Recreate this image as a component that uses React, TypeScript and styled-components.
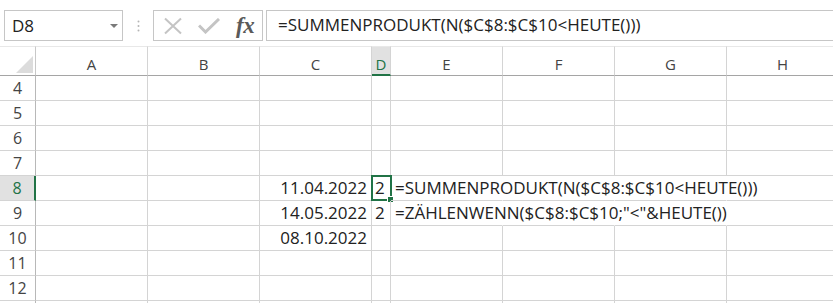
import React from 'react';
import styled, { createGlobalStyle } from 'styled-components';

const GlobalStyle = createGlobalStyle`
  html, body { margin: 0; padding: 0; background: #fff; }
  body {
    width: 833px; height: 303px; overflow: hidden;
    font-family: "Open Sans", "Liberation Sans", sans-serif;
  }
`;

const Page = styled.div`
  width: 833px;
  height: 303px;
  overflow: hidden;
  background: #fff;
`;

const Toolbar = styled.div`
  display: flex;
  align-items: flex-start;
  height: 46px;
  box-sizing: border-box;
  padding: 10px 0 0 4px;
`;

const NameBox = styled.div`
  flex: none;
  width: 119px;
  height: 31px;
  box-sizing: border-box;
  border: 1px solid #c6c6c6;
  display: flex;
  align-items: center;
  justify-content: space-between;
  padding: 0 4px 0 7px;
  font-size: 17px;
  line-height: 29px;
  color: #222;
`;

const Caret = styled.span`
  width: 0;
  height: 0;
  border-left: 4px solid transparent;
  border-right: 4px solid transparent;
  border-top: 4px solid #7a7a7a;
  margin-top: 1px;
`;

const Grip = styled.div`
  flex: none;
  width: 30px;
  height: 31px;
  display: flex;
  align-items: center;
  justify-content: center;
`;

const FxBox = styled.div`
  flex: none;
  width: 110px;
  height: 31px;
  box-sizing: border-box;
  border: 1px solid #c6c6c6;
  display: flex;
  align-items: center;
  padding-left: 9px;
`;

const FxIcon = styled.span<{ $gap: number }>`
  display: flex;
  align-items: center;
  margin-left: ${p => p.$gap}px;
`;

const FxText = styled.span`
  margin-left: 16px;
  font-family: "Liberation Serif", "DejaVu Serif", serif;
  font-style: italic;
  font-weight: bold;
  font-size: 23px;
  line-height: 29px;
  color: #5a5a5a;
  letter-spacing: -0.5px;
`;

const FormulaBox = styled.div`
  flex: 1;
  margin-left: 3px;
  height: 31px;
  box-sizing: border-box;
  border: 1px solid #c6c6c6;
  border-right: none;
  padding-left: 11px;
  font-size: 17px;
  line-height: 28px;
  color: #222;
  white-space: nowrap;
  overflow: hidden;
`;

const Sheet = styled.div`
  display: grid;
  grid-template-columns: 36px 112px 112px 112px 19px 112px 112px 112px 112px;
  grid-template-rows: 30px;
  grid-auto-rows: 25px;
`;

const Corner = styled.div`
  box-sizing: border-box;
  border-top: 1px solid #e8e8e8;
  border-right: 1px solid #c8c8c8;
  border-bottom: 1px solid #a5a5a5;
  display: flex;
  align-items: flex-end;
  justify-content: flex-end;
  padding: 0 2px 2px 0;
`;

const ColHead = styled.div<{ $active?: boolean }>`
  box-sizing: border-box;
  border-top: 1px solid #e8e8e8;
  border-right: 1px solid #d4d4d4;
  border-bottom: ${p => (p.$active ? '2px solid #217346' : '1px solid #a5a5a5')};
  background: ${p => (p.$active ? '#e1e1e1' : '#fff')};
  color: ${p => (p.$active ? '#217346' : '#444')};
  display: flex;
  align-items: flex-end;
  justify-content: center;
  font-size: 15px;
  line-height: 20px;
  padding-bottom: ${p => (p.$active ? 0 : 1)}px;
`;

const RowHead = styled.div<{ $active?: boolean }>`
  box-sizing: border-box;
  border-bottom: 1px solid #d4d4d4;
  border-right: ${p => (p.$active ? '2px solid #217346' : '1px solid #b8b8b8')};
  background: ${p => (p.$active ? '#e1e1e1' : '#fff')};
  color: ${p => (p.$active ? '#217346' : '#444')};
  font-size: 16px;
  line-height: 24px;
  text-align: center;
`;

const Cell = styled.div<{ $align?: 'left' | 'right'; $hideRight?: boolean; $pad?: number }>`
  position: relative;
  box-sizing: border-box;
  border-right: 1px solid ${p => (p.$hideRight ? 'transparent' : '#d4d4d4')};
  border-bottom: 1px solid #d4d4d4;
  font-size: 17px;
  line-height: 24px;
  color: #222;
  white-space: nowrap;
  overflow: visible;
  text-align: ${p => p.$align ?? 'left'};
  padding: 0 ${p => p.$pad ?? 4}px;
`;

const Selection = styled.div`
  position: absolute;
  top: -1px;
  left: -1px;
  right: -2px;
  bottom: -1px;
  border: 2px solid #217346;
  pointer-events: none;
`;

const Handle = styled.span`
  position: absolute;
  right: -4px;
  bottom: -4px;
  width: 5px;
  height: 5px;
  background: #217346;
  border: 1px solid #fff;
`;

const COLS = ['A', 'B', 'C', 'D', 'E', 'F', 'G', 'H'];
const ROWS = [4, 5, 6, 7, 8, 9, 10, 11, 12, 13];
const VISIBLE_LAST = 12;

const DATES: Record<number, string> = { 8: '11.04.2022', 9: '14.05.2022', 10: '08.10.2022' };
const COUNTS: Record<number, string> = { 8: '2', 9: '2' };
const FORMULAS: Record<number, string> = {
  8: '=SUMMENPRODUKT(N($C$8:$C$10<HEUTE()))',
  9: '=ZÄHLENWENN($C$8:$C$10;"<"&HEUTE())',
};

export default function App() {
  return (
    <Page>
      <GlobalStyle />
      <Toolbar>
        <NameBox>
          <span>D8</span>
          <Caret />
        </NameBox>
        <Grip>
          <svg width="3" height="12" viewBox="0 0 3 12">
            <circle cx="1.5" cy="1.5" r="1" fill="#b5b5b5" />
            <circle cx="1.5" cy="6" r="1" fill="#b5b5b5" />
            <circle cx="1.5" cy="10.5" r="1" fill="#b5b5b5" />
          </svg>
        </Grip>
        <FxBox>
          <FxIcon $gap={0}>
            <svg width="20" height="18" viewBox="0 0 20 18">
              <path d="M2 1.5 L18 16.5 M18 1.5 L2 16.5" stroke="#c4c4c4" strokeWidth="2" fill="none" />
            </svg>
          </FxIcon>
          <FxIcon $gap={15}>
            <svg width="22" height="16" viewBox="0 0 22 16">
              <path d="M1 7.5 L7.5 14 L21 1" stroke="#c4c4c4" strokeWidth="3" fill="none" />
            </svg>
          </FxIcon>
          <FxText>fx</FxText>
        </FxBox>
        <FormulaBox>=SUMMENPRODUKT(N($C$8:$C$10&lt;HEUTE()))</FormulaBox>
      </Toolbar>
      <Sheet>
        <Corner>
          <svg width="17" height="17" viewBox="0 0 17 17">
            <polygon points="17,0 17,17 0,17" fill="#dcdcdc" />
          </svg>
        </Corner>
        {COLS.map(c => (
          <ColHead key={c} $active={c === 'D'}>{c}</ColHead>
        ))}
        {ROWS.map(r => {
          const overflow = !!FORMULAS[r];
          return (
            <React.Fragment key={r}>
              <RowHead $active={r === 8}>{r <= VISIBLE_LAST ? r : ''}</RowHead>
              <Cell />
              <Cell />
              <Cell $align="right">{DATES[r]}</Cell>
              <Cell $pad={3}>
                {COUNTS[r]}
                {r === 8 && (
                  <Selection>
                    <Handle />
                  </Selection>
                )}
              </Cell>
              <Cell $hideRight={overflow}>{FORMULAS[r]}</Cell>
              <Cell $hideRight={overflow} />
              <Cell $hideRight={overflow} />
              <Cell />
            </React.Fragment>
          );
        })}
      </Sheet>
    </Page>
  );
}
